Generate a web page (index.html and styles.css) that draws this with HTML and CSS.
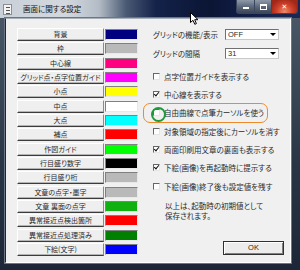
FILE: index.html
```html
<!DOCTYPE html>
<html>

<head>
    <title>画面に関する設定</title>
    <meta charset="utf-8">
    <link rel="stylesheet" href="styles.css">
</head>

<body>
    <div class="ventana">
        <div class="titulo">
            <span class="icono"><i></i><i></i><i></i></span>
            <span class="textoTitulo">画面に関する設定</span>
            <div class="botonesTitulo">
                <span class="btMin"><i></i></span>
                <span class="btMax"><i></i></span>
                <span class="btCerrar">✕</span>
            </div>
        </div>
        <div class="cliente">
            <div class="colores">
                <div class="fila"><span class="boton">背景</span><span class="muestra" style="background:#000080"></span></div>
                <div class="fila"><span class="boton">枠</span><span class="muestra" style="background:#b9b9b9"></span></div>
                <div class="fila"><span class="boton">中心線</span><span class="muestra" style="background:#ff0080"></span></div>
                <div class="fila"><span class="boton">グリッド点・点字位置ガイド</span><span class="muestra" style="background:#ff00ff"></span></div>
                <div class="fila"><span class="boton">小点</span><span class="muestra" style="background:#ffff00"></span></div>
                <div class="fila"><span class="boton">中点</span><span class="muestra" style="background:#ffffff"></span></div>
                <div class="fila"><span class="boton">大点</span><span class="muestra" style="background:#00ffff"></span></div>
                <div class="fila"><span class="boton">補点</span><span class="muestra" style="background:#ff0000"></span></div>
                <div class="fila"><span class="boton">作図ガイド</span><span class="muestra" style="background:#00ff00"></span></div>
                <div class="fila"><span class="boton">行目盛り数字</span><span class="muestra" style="background:#000000"></span></div>
                <div class="fila"><span class="boton">行目盛り桁</span><span class="muestra" style="background:#b9b9b9"></span></div>
                <div class="fila"><span class="boton">文章の点字・墨字</span><span class="muestra" style="background:#b9b9b9"></span></div>
                <div class="fila"><span class="boton">文章 裏面の点字</span><span class="muestra" style="background:#10b010"></span></div>
                <div class="fila"><span class="boton">異常接近点検出箇所</span><span class="muestra" style="background:#ff0000"></span></div>
                <div class="fila"><span class="boton">異常接近点処理済み</span><span class="muestra" style="background:#008000"></span></div>
                <div class="fila"><span class="boton">下絵(文字)</span><span class="muestra" style="background:#0000ff"></span></div>
            </div>
            <div class="opciones">
                <div class="ajuste"><span class="etiqueta">グリッドの機能/表示</span><span class="combo">OFF<i></i></span></div>
                <div class="ajuste segundo"><span class="etiqueta">グリッドの間隔</span><span class="combo">31<i></i></span></div>
                <div class="casillas">
                    <div class="casilla"><span class="caja"></span>点字位置ガイドを表示する</div>
                    <div class="casilla"><span class="caja marcada"></span>中心線を表示する</div>
                    <div class="casilla"><span class="caja"></span>自由曲線で点筆カーソルを使う</div>
                    <div class="casilla"><span class="caja"></span>対象領域の指定後にカーソルを消す</div>
                    <div class="casilla"><span class="caja marcada"></span>両面印刷用文章の裏面も表示する</div>
                    <div class="casilla"><span class="caja marcada"></span>下絵(画像)を再起動時に提示する</div>
                    <div class="casilla"><span class="caja"></span>下絵(画像)終了後も設定値を残す</div>
                </div>
                <div class="nota">以上は、起動時の初期値として<br/>保存されます。</div>
                <div class="btOk">OK</div>
            </div>
        </div>
        <div class="marcoNaranja"></div>
        <div class="circuloVerde"></div>
        <svg class="cursor" width="9" height="13" viewBox="0 0 9 13">
            <path d="M0.5 0.5 L0.5 10.5 L3 8.3 L4.8 12.3 L6.4 11.6 L4.7 7.7 L8 7.7 Z" fill="#fff" stroke="#000" stroke-width="1" />
        </svg>
    </div>
</body>

</html>
```

FILE: styles.css
```css
body {
    margin: 0;
    font-family: "Noto Sans CJK JP", "Liberation Sans", sans-serif;
    font-feature-settings: "palt";
    color: #2a2a2a;
}

.ventana {
    position: relative;
    width: 300px;
    height: 270px;
    background: linear-gradient(to bottom, #4c5a6a, #2a3646 60%, #1c2636);
    overflow: hidden;
}

.titulo {
    display: flex;
    align-items: center;
    height: 18px;
    padding-left: 3px;
    background: linear-gradient(to right, #c9d0d7 0%, #d3d8de 22%, #b3bcc6 33%, #4a5a74 42%, #14224a 52%, #0b1534 70%, #12204a 85%, #1a2852 100%);
}

.icono {
    display: flex;
    flex-direction: column;
    gap: 2px;
    width: 9px;
    height: 11px;
    padding: 2px 1px 0 2px;
    box-sizing: border-box;
    background: #f4f4f4;
    border: 1px solid #8a8f96;
}

.icono i {
    display: block;
    height: 1px;
    width: 4px;
    background: #555;
}

.textoTitulo {
    margin-left: 11px;
    font-size: 7.5px;
    line-height: 10px;
    color: #111;
}

.botonesTitulo {
    display: flex;
    margin-left: auto;
    margin-right: 2px;
    align-self: flex-start;
    height: 14px;
}

.btMin,
.btMax,
.btCerrar {
    display: flex;
    align-items: center;
    justify-content: center;
    height: 14px;
    border: 1px solid #3a4660;
    border-top: none;
    box-sizing: border-box;
}

.btMin {
    width: 19px;
    background: linear-gradient(to bottom, #8e99a8, #5d6a7c 50%, #3a4658);
    border-radius: 0 0 0 3px;
}

.btMin i {
    width: 6px;
    height: 2px;
    margin-top: 3px;
    background: #fff;
}

.btMax {
    width: 17px;
    background: linear-gradient(to bottom, #8e99a8, #5d6a7c 50%, #3a4658);
    border-left: none;
}

.btMax i {
    width: 5px;
    height: 3px;
    border: 1px solid #fff;
    border-top-width: 2px;
}

.btCerrar {
    width: 26px;
    border-left: none;
    border-radius: 0 0 3px 0;
    background: radial-gradient(ellipse at 50% 90%, #f08a6a, #d0402a 45%, #a02818 80%);
    color: #fff;
    font-family: "DejaVu Sans", sans-serif;
    font-size: 7px;
    font-weight: bold;
}

.cliente {
    display: flex;
    margin-left: 5px;
    width: 284px;
    height: 243px;
    background: #f0f0f0;
    border-left: 1px solid #1e2632;
    border-top: 1px solid #a8b0ba;
    border-right: 1px solid #ffffff;
    border-bottom: 1px solid #ffffff;
    outline: 1px solid #6a7686;
}

.colores {
    display: flex;
    flex-direction: column;
    padding: 9px 0 0 11px;
}

.fila {
    display: flex;
    height: 14.33px;
}

.boton {
    width: 87px;
    height: 13px;
    box-sizing: border-box;
    background: #efefef;
    border: 1px solid;
    border-color: #ffffff #8a8a8a #3c3c3c #ffffff;
    box-shadow: inset 0 -1px #b4b4b4;
    font-size: 7px;
    line-height: 11px;
    text-align: center;
    white-space: nowrap;
}

.muestra {
    width: 33px;
    height: 11px;
    margin: 1px 0 0 1px;
    box-sizing: border-box;
    border: 1px solid;
    border-color: #808080 #e8e8e8 #e8e8e8 #808080;
}

.opciones {
    display: flex;
    flex-direction: column;
    margin-left: 14px;
    padding-top: 9px;
    font-size: 7.5px;
}

.ajuste {
    display: flex;
    align-items: center;
    height: 12px;
    padding-left: 1px;
}

.segundo {
    margin-top: 7px;
}

.etiqueta {
    width: 72px;
    white-space: nowrap;
}

.combo {
    position: relative;
    width: 54px;
    height: 11px;
    box-sizing: border-box;
    padding-left: 2px;
    background: #fff;
    border: 1px solid;
    border-color: #707070 #c8c8c8 #c8c8c8 #707070;
    font-family: "Liberation Sans", sans-serif;
    font-size: 7.5px;
    line-height: 9px;
}

.combo i {
    position: absolute;
    right: 2px;
    top: 3px;
    border-left: 3px solid transparent;
    border-right: 3px solid transparent;
    border-top: 3px solid #000;
}

.casillas {
    display: flex;
    flex-direction: column;
    margin-top: 8px;
}

.casilla {
    display: flex;
    align-items: center;
    height: 18.33px;
    padding-left: 1px;
    white-space: nowrap;
}

.caja {
    position: relative;
    width: 7px;
    height: 7px;
    margin-right: 4px;
    box-sizing: border-box;
    background: #fff;
    border: 1px solid;
    border-color: #666 #e6e6e6 #e6e6e6 #666;
}

.marcada::after {
    content: "";
    position: absolute;
    left: 1px;
    top: -1px;
    width: 2px;
    height: 4px;
    border: solid #111;
    border-width: 0 1px 1px 0;
    transform: rotate(40deg);
}

.nota {
    margin-top: 6px;
    padding-left: 13px;
    line-height: 10px;
}

.btOk {
    width: 61px;
    height: 14px;
    margin: 20px 0 0 71px;
    box-sizing: border-box;
    background: #ececec;
    border: 1px solid #303030;
    box-shadow: inset 1px 1px #fff, inset -1px -1px #808080;
    font-family: "Liberation Sans", sans-serif;
    font-size: 7.5px;
    line-height: 12px;
    text-align: center;
}

.marcoNaranja {
    position: absolute;
    left: 143px;
    top: 103px;
    width: 125px;
    height: 20px;
    box-sizing: border-box;
    border: 1.5px solid #ee8a2a;
    border-radius: 7px;
}

.circuloVerde {
    position: absolute;
    left: 151px;
    top: 107px;
    width: 15px;
    height: 15px;
    box-sizing: border-box;
    border: 2.5px solid #1e9a3c;
    border-radius: 50%;
}

.cursor {
    position: absolute;
    left: 190px;
    top: 12px;
}
```
